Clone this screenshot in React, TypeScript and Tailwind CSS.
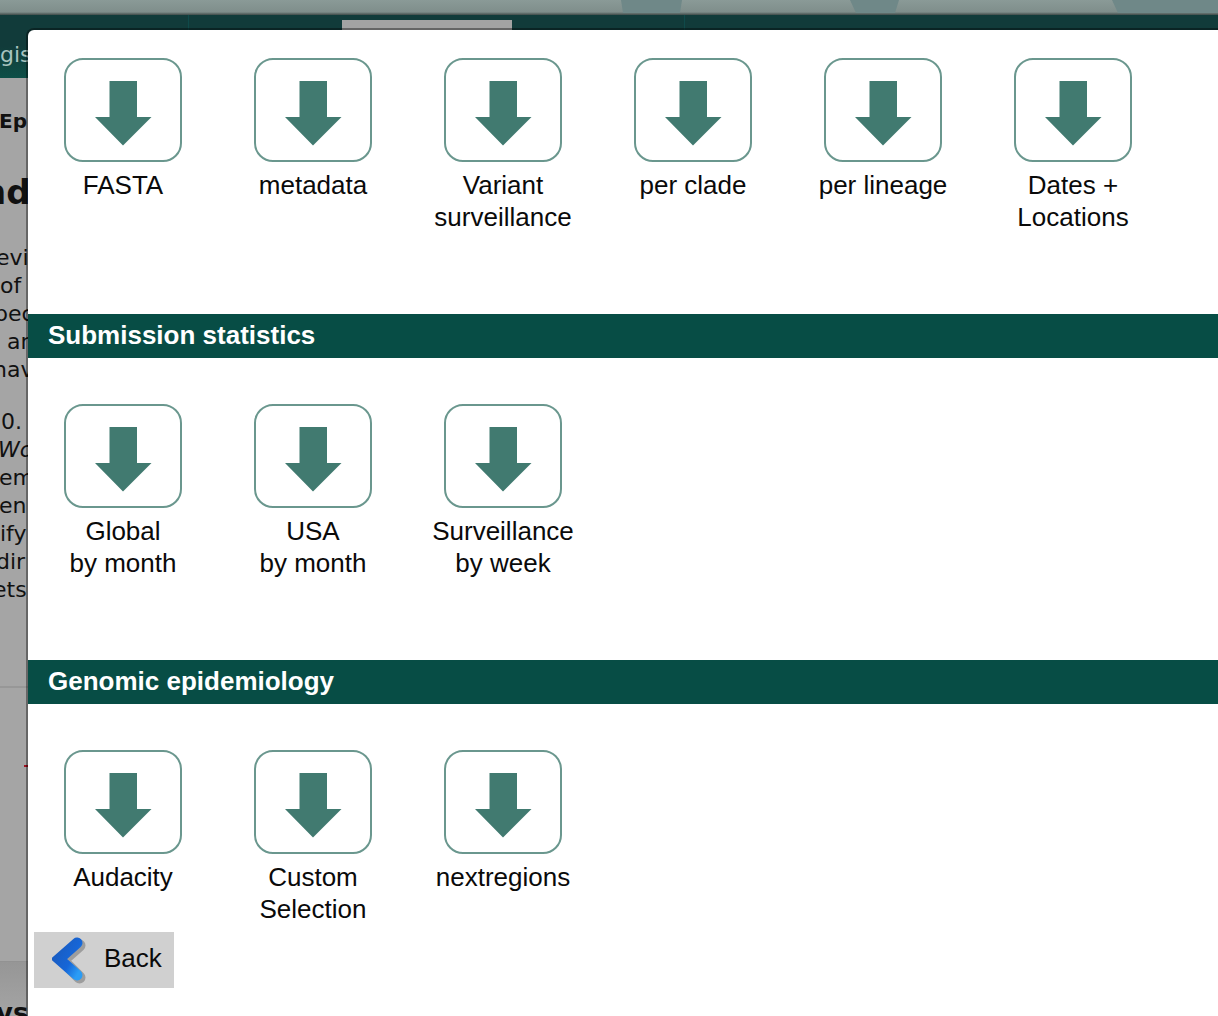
const sans = "font-['Liberation_Sans',Arial,sans-serif]";

function DownloadTile({ lines }: { lines: string[] }) {
  return (
    <div className="w-[190px] flex flex-col items-center">
      <div className="w-[118px] h-[104px] rounded-[19px] border-2 border-[#6a978e] bg-white flex justify-center pt-[21px]">
        <svg width="58" height="65" viewBox="0 0 58 65" className="block">
          <path d="M15.5 0H43V36H57.5L29 64.5L1 36H15.5Z" fill="#417a70" />
        </svg>
      </div>
      <div className="mt-[7px] text-[26px] leading-[32px] text-[#0a0a0a] text-center whitespace-nowrap">
        {lines.map((l) => (
          <div key={l}>{l}</div>
        ))}
      </div>
    </div>
  );
}

function Row({ items }: { items: string[][] }) {
  return (
    <div className="flex">
      {items.map((lines) => (
        <DownloadTile key={lines.join(" ")} lines={lines} />
      ))}
    </div>
  );
}

function Header({ children }: { children: string }) {
  return (
    <div className="h-[44px] bg-[#074d45] pl-[20px] pb-[2px] flex items-center text-white font-bold text-[26px] leading-none">
      {children}
    </div>
  );
}

function BackLine({ text, shift, extra }: { text: string; shift: string; extra?: string }) {
  return <div className={`h-[28px] leading-[28px] whitespace-nowrap ${shift} ${extra ?? ""}`}>{text}</div>;
}

export default function App() {
  return (
    <div className="relative w-[1218px] h-[1016px] overflow-hidden bg-[#a5a5a5] font-['DejaVu_Sans',sans-serif] text-[#111]">
      {/* dimmed page header */}
      <svg width="1218" height="15" viewBox="0 0 1218 15" className="block">
        <defs>
          <linearGradient id="top" x1="0" y1="0" x2="0" y2="1">
            <stop offset="0" stopColor="#8a9a97" />
            <stop offset="0.8" stopColor="#7f8e8b" />
            <stop offset="1" stopColor="#3f4a48" />
          </linearGradient>
        </defs>
        <rect width="1218" height="15" fill="url(#top)" />
        <path d="M621 0H682L680 13H623Z" fill="#6f8888" />
        <path d="M850 0H899L895 13H856Z" fill="#6f8888" />
        <path d="M1112 0H1218V13H1118Z" fill="#6f8888" />
      </svg>
      <div className="h-[63px] bg-gradient-to-b from-[#113b3a] via-[#113b3a] to-[#0d4f47]">
        <div className="flex h-[15px]">
          <div className="ml-[188px] w-[1px] h-[15px] bg-[#0f4a4a]" />
          <div className="ml-[153px] w-[170px] h-[15px] pt-[5px]">
            <div className="h-[10px] bg-[#a3a3a3]" />
          </div>
          <div className="ml-[172px] w-[1px] h-[15px] bg-[#0f4a4a]" />
        </div>
        <div className="pt-[11px] text-[22px] leading-[28px] text-[#a8c4bf] ml-0">gis</div>
      </div>

      {/* dimmed page text behind the dialog */}
      <div className="pt-[29px] text-[20px] font-bold leading-[28px] -ml-[1px]">Ep</div>
      <div className="mt-[33px] text-[34px] font-bold leading-[48px] -ml-[18px] whitespace-nowrap">nd</div>
      <div className="mt-[28px] text-[22px]">
        <BackLine text="evi" shift="-ml-[4px]" />
        <BackLine text="of" shift="ml-0" />
        <BackLine text="pec" shift="-ml-[6px]" />
        <BackLine text="ar" shift="ml-[7px]" />
        <BackLine text="hav" shift="-ml-[7px]" />
        <div className="h-[24px]" />
        <BackLine text="0." shift="ml-[1px]" />
        <BackLine text="Wo" shift="-ml-[2px]" extra="italic" />
        <BackLine text="em" shift="-ml-[1px]" />
        <BackLine text="en" shift="-ml-[1px]" />
        <BackLine text="ify" shift="ml-0" />
        <BackLine text="dir" shift="-ml-[4px]" />
        <BackLine text="ets," shift="-ml-[7px]" />
      </div>
      <div className="mt-[82px] h-[2px] bg-[#979797]" />
      <div className="mt-[77px] ml-[24px] w-[4px] h-[2px] bg-[#a01020]" />
      <div className="mt-[194px] h-[1px] bg-[#929292]" />
      <div className="h-[55px] bg-gradient-to-b from-[#969696] to-[#a5a5a5]">
        <div className="pt-[36px] text-[26px] font-bold leading-[30px] -ml-[4px]">ys</div>
      </div>

      {/* dialog */}
      <div
        className={`absolute left-[28px] top-[30px] right-0 bottom-0 bg-white rounded-tl-[6px] shadow-[0_0_0_2px_rgba(0,0,0,0.38)] ${sans}`}
      >
        <div className="h-[284px] pt-[28px]">
          <Row
            items={[
              ["FASTA"],
              ["metadata"],
              ["Variant", "surveillance"],
              ["per clade"],
              ["per lineage"],
              ["Dates +", "Locations"],
            ]}
          />
        </div>
        <Header>Submission statistics</Header>
        <div className="h-[302px] pt-[46px]">
          <Row
            items={[
              ["Global", "by month"],
              ["USA", "by month"],
              ["Surveillance", "by week"],
            ]}
          />
        </div>
        <Header>Genomic epidemiology</Header>
        <div className="h-[228px] pt-[46px]">
          <Row items={[["Audacity"], ["Custom", "Selection"], ["nextregions"]]} />
        </div>
        <div className="ml-[6px] w-[140px] h-[56px] bg-[#d0d0d0] flex items-center">
          <svg width="36" height="50" viewBox="0 0 36 50" className="ml-[18px] block">
            <defs>
              <linearGradient id="chev" x1="0" y1="0" x2="1" y2="1">
                <stop offset="0" stopColor="#1a5cc0" />
                <stop offset="0.6" stopColor="#1666d8" />
                <stop offset="1" stopColor="#2a9cf5" />
              </linearGradient>
            </defs>
            <path d="M26 9L9 24L26 41" fill="none" stroke="#7c7c7c" strokeOpacity="0.6" strokeWidth="12" strokeLinejoin="round" strokeLinecap="round" transform="translate(1.5 1.5)" />
            <path d="M25 8L7 24L25 40" fill="none" stroke="url(#chev)" strokeWidth="11" strokeLinejoin="miter" strokeLinecap="round" />
          </svg>
          <span className="ml-[16px] pb-[5px] text-[26px] leading-none text-[#0a0a0a]">Back</span>
        </div>
      </div>
    </div>
  );
}
